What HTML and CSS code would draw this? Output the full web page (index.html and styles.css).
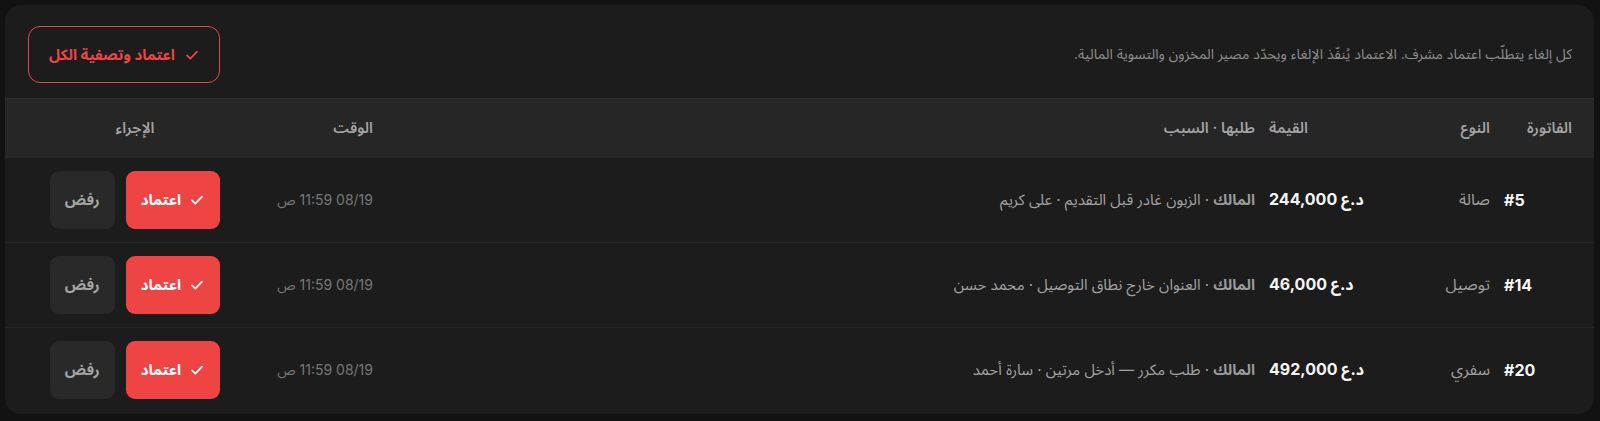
FILE: index.html
```html
<!DOCTYPE html>
<html lang="ar" dir="rtl">
<head>
<meta charset="utf-8">
<link rel="stylesheet" href="styles.css">
</head>
<body>
<div class="card">
  <div class="top">
    <p class="desc">كل إلغاء يتطلّب اعتماد مشرف. الاعتماد يُنفّذ الإلغاء ويحدّد مصير المخزون والتسوية المالية.</p>
    <button class="btn-all"><svg class="chk" viewBox="0 0 24 24"><polyline points="4.5 12.5 9.5 17.5 19.5 7"/></svg><span>اعتماد وتصفية الكل</span></button>
  </div>
  <div class="grid head">
    <div class="c-inv">الفاتورة</div>
    <div class="c-type">النوع</div>
    <div class="c-amt h-amt">القيمة</div>
    <div class="c-reason">طلبها · السبب</div>
    <div class="c-time">الوقت</div>
    <div class="c-act">الإجراء</div>
  </div>
  <div class="grid row">
    <div class="c-inv num" dir="ltr">#5</div>
    <div class="c-type">صالة</div>
    <div class="c-amt num" dir="ltr">244,000 د.ع</div>
    <div class="c-reason"><b>المالك</b> · الزبون غادر قبل التقديم · على كريم</div>
    <div class="c-time">08/19 11:59 ص</div>
    <div class="c-act"><button class="btn-ok"><svg class="chk" viewBox="0 0 24 24"><polyline points="4.5 12.5 9.5 17.5 19.5 7"/></svg><span>اعتماد</span></button><button class="btn-no">رفض</button></div>
  </div>
  <div class="grid row">
    <div class="c-inv num" dir="ltr">#14</div>
    <div class="c-type">توصيل</div>
    <div class="c-amt num" dir="ltr">46,000 د.ع</div>
    <div class="c-reason"><b>المالك</b> · العنوان خارج نطاق التوصيل · محمد حسن</div>
    <div class="c-time">08/19 11:59 ص</div>
    <div class="c-act"><button class="btn-ok"><svg class="chk" viewBox="0 0 24 24"><polyline points="4.5 12.5 9.5 17.5 19.5 7"/></svg><span>اعتماد</span></button><button class="btn-no">رفض</button></div>
  </div>
  <div class="grid row">
    <div class="c-inv num" dir="ltr">#20</div>
    <div class="c-type">سفري</div>
    <div class="c-amt num" dir="ltr">492,000 د.ع</div>
    <div class="c-reason"><b>المالك</b> · طلب مكرر — أدخل مرتين · سارة أحمد</div>
    <div class="c-time">08/19 11:59 ص</div>
    <div class="c-act"><button class="btn-ok"><svg class="chk" viewBox="0 0 24 24"><polyline points="4.5 12.5 9.5 17.5 19.5 7"/></svg><span>اعتماد</span></button><button class="btn-no">رفض</button></div>
  </div>
</div>
</body>
</html>
```
FILE: styles.css
```css
html, body {
  margin: 0;
  background: #121212;
}
body {
  padding: 5px 6px 7px 5px;
  font-family: "Inter", "Noto Sans Arabic", "Noto Sans", "DejaVu Sans", sans-serif;
  color: #f2f2f2;
}
.card {
  background: #1c1c1c;
  border-radius: 16px;
  overflow: hidden;
  height: 409px;
}
.top {
  display: flex;
  align-items: center;
  justify-content: space-between;
  padding: 21px 22px 15px 23px;
}
.desc {
  margin: 0;
  font-size: 14px;
  color: #8e8e8e;
}
button {
  font-family: inherit;
  cursor: pointer;
}
.btn-all {
  display: flex;
  align-items: center;
  gap: 9px;
  height: 57px;
  padding: 0 19px 0 20px;
  background: transparent;
  border: 1px solid #e5484d;
  border-radius: 12px;
  color: #ef4444;
  font-size: 15px;
  font-weight: 700;
}
.chk {
  width: 16px;
  height: 16px;
  fill: none;
  stroke: currentColor;
  stroke-width: 2.6;
  stroke-linecap: round;
  stroke-linejoin: round;
}
.grid {
  display: grid;
  grid-template-columns: 68px 99px 108px 1fr 117px 214px;
  column-gap: 14px;
  align-items: center;
  padding: 0 22px 0 23px;
}
.head {
  height: 58px;
  background: #262626;
  border-top: 1px solid #2e2e2e;
  font-size: 15px;
  font-weight: 600;
  color: #a3a3a3;
}
.row {
  height: 84px;
  border-top: 1px solid #262626;
  font-size: 15px;
  color: #a3a3a3;
}
.c-inv { text-align: right; }
.c-type { text-align: right; }
.row .c-type { font-size: 16px; color: #a0a0a0; }
.h-amt { text-align: left; }
.c-reason { text-align: right; }
.c-reason b { font-weight: 700; color: #9a9a9a; }
.c-time { text-align: right; }
.row .c-time { font-size: 14px; color: #777777; }
.c-act { text-align: center; }
.num {
  text-align: left;
  font-size: 16px;
  font-weight: 700;
  color: #f5f5f5;
}
.row .c-act {
  display: flex;
  justify-content: center;
  gap: 11px;
}
.btn-ok {
  display: flex;
  align-items: center;
  gap: 8px;
  height: 58px;
  padding: 0 15px;
  border: 0;
  border-radius: 9px;
  background: #ef4444;
  color: #ffffff;
  font-size: 15px;
  font-weight: 700;
}
.btn-no {
  height: 58px;
  padding: 0 15px;
  border: 0;
  border-radius: 9px;
  background: #292929;
  color: #a3a3a3;
  font-size: 15px;
  font-weight: 700;
}
```
